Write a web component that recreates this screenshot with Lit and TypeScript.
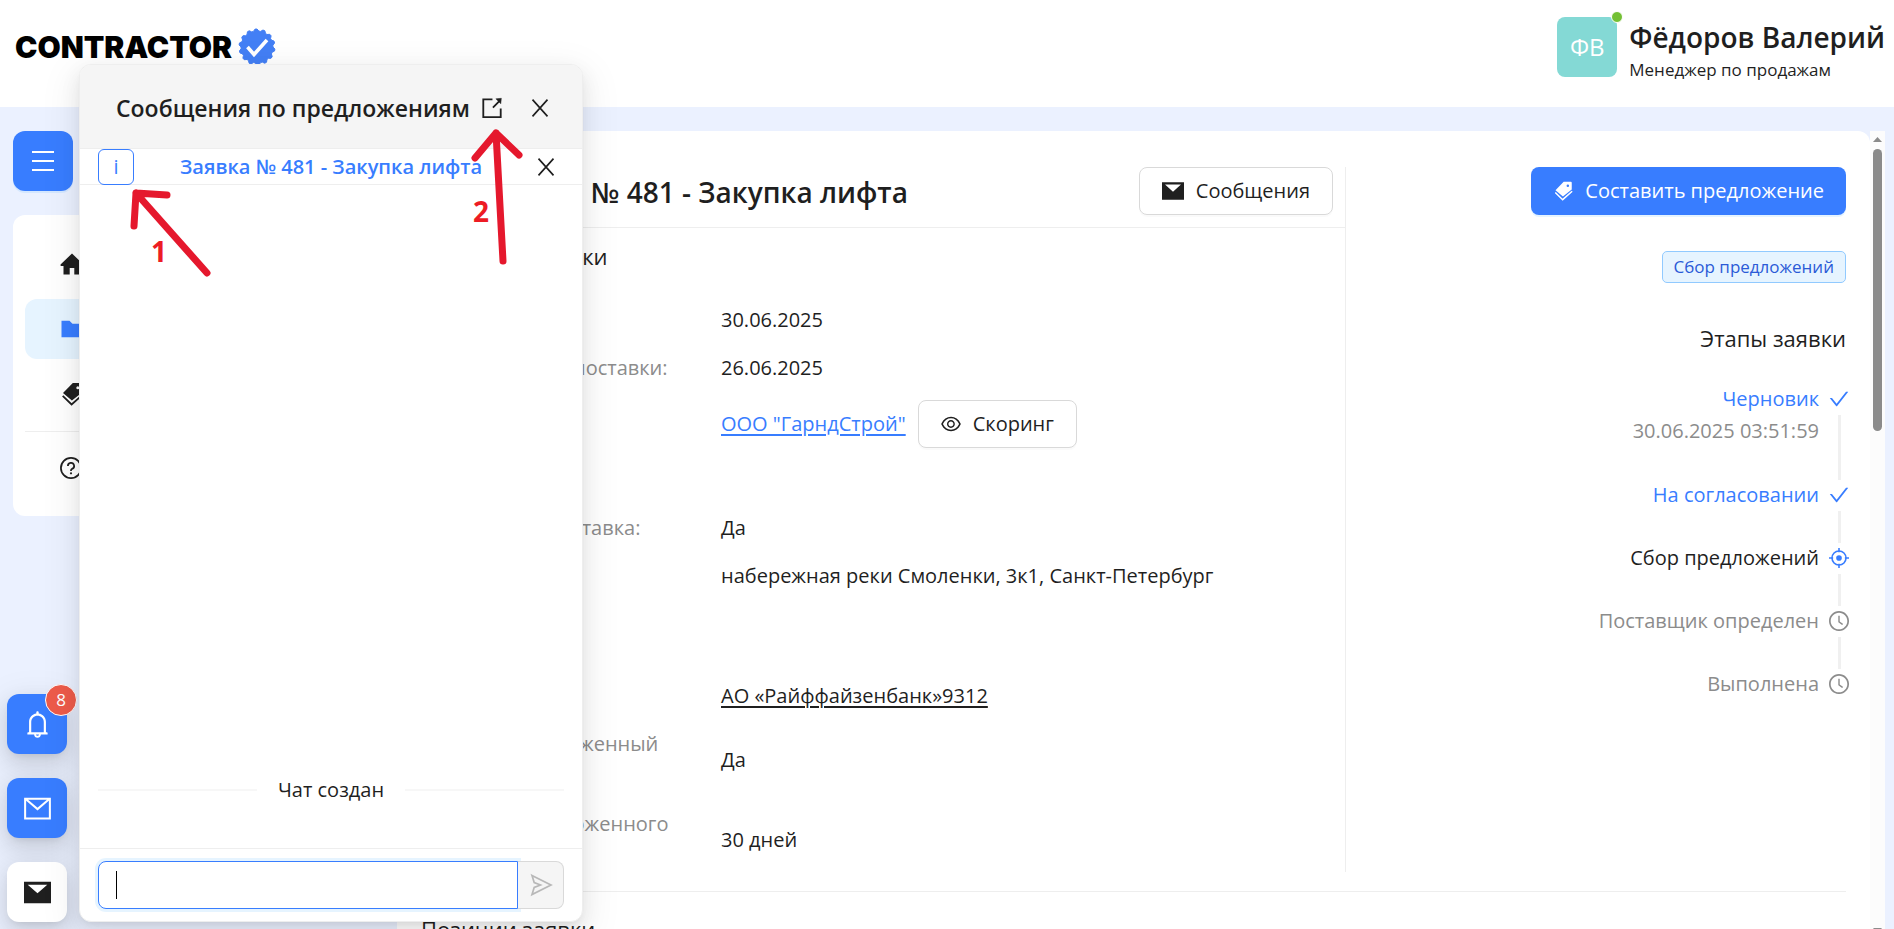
import { LitElement, html, css, svg, nothing } from "lit";
import { customElement } from "lit/decorators.js";

const icon = (name: string, size = 20) => {
  const shapes: Record<string, unknown> = {
    menu: svg`<path d="M1 3h22M1 12h22M1 21h22" fill="none" stroke="currentColor" stroke-width="2"/>`,
    back: svg`<path d="M22 12H3M11 3l-9 9 9 9" fill="none" stroke="currentColor" stroke-width="2"/>`,
    home: svg`<path d="M12 1.500 0.800 12.200c-.7.700-.3 1.800.7 1.800H3.500v8.500h6.200v-6.500h4.600v6.500h6.200V14h2c1 0 1.400-1.100.7-1.800Z"/>`,
    folder: svg`<path d="M1.500 3.800h8l3 3h10v13.400h-21Z"/>`,
    tags: svg`<path fill-rule="evenodd" d="M12.800 1h8.700c.6 0 1 .4 1 1v8.300L11.900 18.500 3 11Zm5 3.300a1.500 1.500 0 1 0 0 3 1.500 1.500 0 0 0 0-3Z"/><path d="m2.700 13.800 8.900 8.600L23 12.300" fill="none" stroke="currentColor" stroke-width="1.800"/>`,
    question: svg`<g fill="none" stroke="currentColor" stroke-width="1.900"><circle cx="12" cy="12" r="11"/><path d="M8.600 9.800a3.400 3.400 0 1 1 4.600 3.100c-.8.300-1.200.9-1.200 1.700v.6"/></g><circle cx="12" cy="17.800" r="1.200"/>`,
    close: svg`<path d="m3 2 18 20M21 2 3 22" fill="none" stroke="currentColor" stroke-width="2"/>`,
    export: svg`<path d="M12.500 2.500h-10v19.500h19V12.500M13 11.500 20 4.500" fill="none" stroke="currentColor" stroke-width="2"/><path d="m16.200 2 6-.6-.6 6Z" stroke="currentColor" stroke-width=".5"/>`,
    mailFilled: svg`<path fill-rule="evenodd" d="M0 2.500h24v19H0ZM3.300 5 12 12.700 20.700 5Z"/>`,
    mail: svg`<path d="M1 3.300h22v17.600H1ZM2 4l10 8.500L22 4" fill="none" stroke="currentColor" stroke-width="1.800"/>`,
    send: svg`<path d="M3 2.500 22 12 3 21.500l2.200-7L11.500 12 5.200 9.500Z" fill="none" stroke="currentColor" stroke-width="1.700"/>`,
    aim: svg`<g fill="none" stroke="currentColor" stroke-width="1.900"><circle cx="12" cy="12" r="8.400"/><path d="M12 0v5M12 19v5M0 12h5M19 12h5"/></g><circle cx="12" cy="12" r="3.400"/>`,
    check: svg`<path transform="scale(.0268) translate(-64 -64)" d="M912 190h-69.900c-9.800 0-19.100 4.500-25.100 12.200L404.700 724.500 207 474a32 32 0 00-25.100-12.200H112c-6.700 0-10.400 7.700-6.300 12.900l273.900 347c12.800 16.200 37.400 16.200 50.300 0l488.400-618.900c4.100-5.100.4-12.800-6.300-12.800z"/>`,
    clock: svg`<g transform="scale(.0268) translate(-64 -64)"><path d="M512 64C264.600 64 64 264.600 64 512s200.600 448 448 448 448-200.600 448-448S759.400 64 512 64zm0 820c-205.400 0-372-166.600-372-372s166.600-372 372-372 372 166.600 372 372-166.600 372-372 372z"/><path d="M686.700 638.600L544.100 535.500V288c0-4.400-3.600-8-8-8H488c-4.400 0-8 3.600-8 8v275.400c0 2.600 1.200 5 3.300 6.500l165.400 120.600c3.600 2.600 8.600 1.800 11.200-1.700l28.600-39c2.600-3.700 1.800-8.700-1.800-11.200z"/></g>`,
    eye: svg`<path transform="scale(.0268) translate(-64 -64)" d="M942.200 486.200C847.400 286.500 704.100 186 512 186c-192.200 0-335.400 100.500-430.200 300.300a60.300 60.300 0 000 51.500C176.600 737.500 319.900 838 512 838c192.200 0 335.400-100.500 430.200-300.300 7.700-16.200 7.700-35 0-51.500zM512 766c-161.300 0-279.400-81.800-362.700-254C232.600 339.800 350.700 258 512 258c161.300 0 279.400 81.800 362.700 254C791.500 684.200 673.400 766 512 766zm-4-430c-97.200 0-176 78.800-176 176s78.800 176 176 176 176-78.800 176-176-78.800-176-176-176zm0 288c-61.900 0-112-50.100-112-112s50.100-112 112-112 112 50.100 112 112-50.100 112-112 112z"/>`,
    bell: svg`<path transform="scale(.0268) translate(-64 -64)" d="M816 768h-24V428c0-141.100-104.300-257.800-240-277.200V112c0-22.100-17.900-40-40-40s-40 17.900-40 40v38.800C336.300 170.200 232 286.900 232 428v340h-24c-17.700 0-32 14.300-32 32v32c0 4.400 3.600 8 8 8h216c0 61.800 50.200 112 112 112s112-50.200 112-112h216c4.400 0 8-3.600 8-8v-32c0-17.700-14.300-32-32-32zM512 888c-26.500 0-48-21.500-48-48h96c0 26.500-21.500 48-48 48zM304 768V428c0-55.600 21.600-107.800 60.900-147.100S456.400 220 512 220c55.600 0 107.800 21.600 147.100 60.900S720 372.400 720 428v340H304z"/>`,
  };
  return html`<svg width=${size} height=${size} viewBox="0 0 24 24" fill="currentColor" aria-hidden="true">${shapes[name]}</svg>`;
};

/** Rosette outline with rounded teeth around the wordmark tick. */
const rosette = () => {
  const pts: string[] = [];
  const teeth = 14;
  for (let i = 0; i < teeth * 4; i++) {
    const a = (i / (teeth * 4)) * Math.PI * 2 - Math.PI / 2 - 0.11;
    const r = i % 4 < 2 ? 18 : 16;
    pts.push(`${(19 + r * Math.cos(a)).toFixed(2)},${(19 + r * Math.sin(a)).toFixed(2)}`);
  }
  return html`<svg width="38" height="38" viewBox="0 0 38 38" aria-hidden="true">
    <polygon points=${pts.join(" ")} fill="#437ff5" stroke="#437ff5" stroke-width="1" stroke-linejoin="round"/>
    <path d="m9.500 19 6.500 7.500L29 12" fill="none" stroke="#fff" stroke-width="3.600"/>
  </svg>`;
};

type Row = { label: string; value: unknown };

@customElement("app-root")
export class AppRoot extends LitElement {
  static styles = css`
    :host {
      --blue: #387dff;
      --ink: #1f1f1f;
      --muted: #8c8c8c;
      --line: #eeeeee;
      display: flex;
      flex-direction: column;
      height: 100vh;
      overflow: hidden;
      position: relative;
      background: #ebf1ff;
      color: var(--ink);
      font: 400 20px/32px "Open Sans", "Noto Sans", sans-serif;
    }
    * { box-sizing: border-box; }
    h1, h2, p, ul, dl, dd, dt { margin: 0; padding: 0; font-weight: 400; }
    ul { list-style: none; }
    svg { display: block; flex: none; }
    button { font: inherit; color: inherit; border: 0; background: none; padding: 0; cursor: pointer;
      display: flex; align-items: center; justify-content: center; }
    .top { flex: none; height: 107px; background: #fff; display: flex; justify-content: space-between;
      align-items: flex-start; padding: 0 9px 0 15px; }
    .brand { display: flex; align-items: center; gap: 12px; height: 94px; color: #000;
      font: 900 30px/32px Inter, sans-serif; text-decoration: none; }
    .brand { gap: 6px; }
    .user { display: flex; gap: 12px; padding-top: 17px; }
    .avatar { position: relative; width: 60px; height: 60px; border-radius: 8px; background: #84d9d5; color: #fff;
      font-size: 24px; display: flex; align-items: center; justify-content: center; }
    .online { position: absolute; top: -6px; right: -6px; width: 12px; height: 12px; border-radius: 50%;
      background: #73c034; border: 1px solid #fff; }
    .name { font-size: 28px; line-height: 40px; font-weight: 600; }
    .role { font-size: 17px; line-height: 26px; }
    .body { flex: 1; min-height: 0; display: grid; grid-template-columns: 372px minmax(0, 1fr) 15px;
      padding: 24px 9px 0 13px; }
    .side { display: flex; flex-direction: column; align-items: flex-start; gap: 24px; }
    .square { width: 60px; height: 60px; border-radius: 12px; background: var(--blue); color: #fff; }
    .menu-btn { box-shadow: 0 2px 0 rgba(5, 145, 255, .1); }
    .nav { width: 100%; background: #fff; border-radius: 12px; padding: 19px 12px 18px; display: flex; flex-direction: column; gap: 5px; }
    .nav a { display: flex; align-items: center; height: 60px; padding-left: 35px; color: var(--ink); border-radius: 12px; }
    .nav a.on { background: #e6f4ff; color: var(--blue); }
    .nav .rule { margin-top: 2px; padding-top: 6px; border-top: 1px solid var(--line); }
    .card { margin-left: 12px; background: #fff; border-radius: 12px 12px 0 0; padding: 36px 24px 0; overflow: hidden; }
    .cols { display: grid; grid-template-columns: minmax(0, 925fr) minmax(0, 500fr); }
    .left { border-right: 1px solid var(--line); height: 705px; }
    .head { display: flex; gap: 16px; align-items: flex-start; padding: 0 12px 12px 0;
      border-bottom: 1px solid var(--line); }
    h1 { flex: 1; font-size: 28px; line-height: 50px; font-weight: 600; height: 48px; }
    h2 { font-size: 22px; line-height: 32px; }
    .btn { height: 48px; border: 1px solid #d9d9d9; border-radius: 8px; background: #fff; padding: 0 22px; gap: 12px;
      box-shadow: 0 2px 0 rgba(0, 0, 0, .02); }
    .btn.square-btn { width: 48px; padding: 0; }
    .btn.primary { border: 0; background: var(--blue); color: #fff; box-shadow: 0 2px 0 rgba(5, 145, 255, .1); }
    .section { margin-top: 12px; }
    .section + .section { margin-top: 24px; }
    dl { display: flex; flex-direction: column; gap: 16px; margin-top: 32px; }
    .row { display: grid; grid-template-columns: 276px minmax(0, 1fr); column-gap: 24px; align-items: center; }
    dt { color: var(--muted); white-space: pre-line; min-height: 32px; }
    dd { display: flex; align-items: center; gap: 12px; }
    dd a { color: var(--ink); text-underline-offset: 3px; }
    dd a.link { color: var(--blue); }
    .right { display: flex; flex-direction: column; align-items: flex-end; }
    .tag { margin-top: 36px; border: 1px solid #91caff; background: #e6f4ff; color: #2b5bd7; border-radius: 5px;
      font-size: 17px; line-height: 30px; padding: 0 11px; }
    .right h2 { margin-top: 39px; }
    .steps { margin: 29px -3px 0 0; }
    .steps li { display: grid; grid-template-columns: auto 20px; column-gap: 10px; text-align: right; color: var(--muted); min-height: 63px; }
    .steps li.tall { min-height: 96px; }
    .steps .done, .steps .now svg { color: var(--blue); }
    .steps .now { color: var(--ink); }
    .steps .when { color: var(--muted); }
    .mark { display: flex; flex-direction: column; align-items: center; padding-top: 6px; }
    .mark i { flex: 1; width: 3px; background: #f0f0f0; margin: 6px 0 -1px; }
    .below { border-top: 1px solid var(--line); margin-top: 19px; padding-top: 21px; }
    .scroll { background: #fcfcfc; display: flex; flex-direction: column; align-items: center; padding: 6px 0 0; margin-bottom: -12px; }
    .scroll b { width: 9px; height: 282px; border-radius: 5px; background: #8b8b8b; margin: 7px 0 auto; }
    .scroll svg { fill: #8b8b8b; }
    .scroll svg:last-child { margin-bottom: 8px; }

    .floats { position: absolute; left: 7px; bottom: 7px; display: flex; flex-direction: column; gap: 24px; }
    .floats .square { box-shadow: 0 8px 20px rgba(0, 0, 0, .1), 0 4px 8px -5px rgba(0, 0, 0, .15), 0 11px 35px 10px rgba(0, 0, 0, .06); position: relative; }
    .floats .plain { background: #fff; color: var(--ink); }
    .count { position: absolute; top: -10px; right: -10px; width: 32px; height: 32px; border-radius: 50%;
      background: #ed5b4a; border: 1px solid #fff; font-size: 17px; line-height: 30px; }

    .chat { position: absolute; left: 79px; top: 64px; bottom: 7px; width: 504px; display: flex; flex-direction: column;
      background: #fff; border: 1px solid #eee; border-radius: 12px; overflow: hidden;
      box-shadow: 0 8px 20px rgba(0, 0, 0, .08), 0 4px 8px -5px rgba(0, 0, 0, .12), 0 11px 35px 10px rgba(0, 0, 0, .05); }
    .chat-top { display: flex; align-items: center; height: 84px; background: #f5f5f5; padding: 2px 32px 0 36px; border-bottom: 1px solid var(--line); }
    .chat-top h2 { font-size: 23px; font-weight: 600; flex: 1; white-space: nowrap; }
    .chat-top button + button { margin-left: 27px; }
    .chat-sub { display: flex; align-items: center; height: 36px; padding: 0 26px 0 18px; border-bottom: 1px solid var(--line); }
    .chat-sub a { flex: 1; padding-left: 46px; color: var(--blue); font-weight: 600; text-decoration: none; }
    .info { width: 36px; height: 36px; border: 1px solid var(--blue); border-radius: 6px; color: var(--blue); }
    .log { flex: 1; display: flex; flex-direction: column; justify-content: flex-end; padding: 0 18px 42px; }
    .created { display: flex; align-items: center; gap: 21px; }
    .created::before, .created::after { content: ""; flex: 1; height: 2px; background: #f7f7f7; }
    .send { display: flex; position: relative; border-top: 1px solid var(--line); padding: 12px 18px; }
    .send input { flex: 1; min-width: 0; height: 48px; border: 1px solid var(--blue); border-radius: 8px 0 0 8px; padding: 0 17px;
      font: inherit; outline: 0; box-shadow: 0 0 0 3px rgba(5, 145, 255, .1); background: #fff; }
    .send button { width: 46px; height: 48px; background: #f5f5f5; color: #b8b8b8; border: 1px solid #d9d9d9; border-left: 0; border-radius: 0 8px 8px 0; }
    .caret { position: absolute; left: 36px; top: 22px; width: 1px; height: 28px; background: #000; }
    .notes { position: absolute; left: 80px; top: 64px; width: 503px; height: 240px; pointer-events: none; overflow: visible; }
    .notes path { fill: none; stroke: #e5182d; stroke-width: 7; stroke-linecap: round; stroke-linejoin: round; }
    .notes text { font: 700 28px "Open Sans", sans-serif; fill: #ed1c24; }
  `;

  private general: Row[] = [
    { label: "Дата заявки:", value: "30.06.2025" },
    { label: "Желаемая дата поставки:", value: "26.06.2025" },
    {
      label: "Заказчик:",
      value: html`<a class="link" href="#">ООО "ГарндСтрой"</a><button class="btn">${icon("eye", 20)}Скоринг</button>`,
    },
    { label: "", value: nothing },
    { label: "Необходима доставка:", value: "Да" },
    { label: "Адрес:", value: "набережная реки Смоленки, 3к1, Санкт-Петербург" },
  ];

  private payment: Row[] = [
    { label: "Счёт:", value: html`<a href="#">АО «Райффайзенбанк»9312</a>` },
    { label: "Доступный отложенный\nплатёж:", value: "Да" },
    { label: "Период для отложенного\nплатежа:", value: "30 дней" },
  ];

  private rows(list: Row[]) {
    return html`<dl>${list.map((r) => html`<div class="row"><dt>${r.label}</dt><dd>${r.value}</dd></div>`)}</dl>`;
  }

  render() {
    return html`
      <header class="top">
        <a class="brand" href="#">CONTRACTOR${rosette()}</a>
        <div class="user">
          <div class="avatar">ФВ<span class="online"></span></div>
          <div><p class="name">Фёдоров Валерий</p><p class="role">Менеджер по продажам</p></div>
        </div>
      </header>
      <div class="body">
        <div class="side">
          <button class="square menu-btn" aria-label="Меню">${icon("menu", 24)}</button>
          <ul class="nav">
            <li><a href="#" aria-label="Главная">${icon("home", 24)}</a></li>
            <li><a class="on" href="#" aria-label="Заявки">${icon("folder", 24)}</a></li>
            <li><a href="#" aria-label="Предложения">${icon("tags", 24)}</a></li>
            <li class="rule"><a href="#" aria-label="Помощь">${icon("question", 22)}</a></li>
          </ul>
        </div>
        <main class="card">
          <div class="cols">
            <div class="left">
              <div class="head">
                <button class="btn square-btn" aria-label="Назад">${icon("back", 20)}</button>
                <h1>Заявка № 481 - Закупка лифта</h1>
                <button class="btn">${icon("mailFilled", 22)}Сообщения</button>
              </div>
              <section class="section"><h2>Описание заявки</h2>${this.rows(this.general)}</section>
              <section class="section"><h2>Оплата</h2>${this.rows(this.payment)}</section>
            </div>
            <div class="right">
              <button class="btn primary">${icon("tags", 20)}Составить предложение</button>
              <span class="tag">Сбор предложений</span>
              <h2>Этапы заявки</h2>
              <ul class="steps">
                <li class="tall">
                  <div><p class="done">Черновик</p><p class="when">30.06.2025 03:51:59</p></div>
                  <span class="mark done">${icon("check")}<i></i></span>
                </li>
                <li><p class="done">На согласовании</p><span class="mark done">${icon("check")}<i></i></span></li>
                <li class="now"><p>Сбор предложений</p><span class="mark">${icon("aim")}<i></i></span></li>
                <li><p>Поставщик определен</p><span class="mark">${icon("clock")}<i></i></span></li>
                <li><p>Выполнена</p><span class="mark">${icon("clock")}</span></li>
              </ul>
            </div>
          </div>
          <div class="below"><h2>Позиции заявки</h2></div>
        </main>
        <div class="scroll">
          <svg width="9" height="5" viewBox="0 0 9 5"><path d="M0 5 4.500 0 9 5Z"/></svg>
          <b></b>
          <svg width="9" height="5" viewBox="0 0 9 5"><path d="M0 0 4.500 5 9 0Z"/></svg>
        </div>
      </div>

      <div class="floats">
        <button class="square" aria-label="Уведомления">${icon("bell", 27)}<span class="count">8</span></button>
        <button class="square" aria-label="Почта">${icon("mail", 27)}</button>
        <button class="square plain" aria-label="Сообщения">${icon("mailFilled", 27)}</button>
      </div>

      <section class="chat">
        <div class="chat-top">
          <h2>Сообщения по предложениям</h2>
          <button aria-label="Открыть в новом окне">${icon("export", 22)}</button>
          <button aria-label="Закрыть">${icon("close", 20)}</button>
        </div>
        <div class="chat-sub">
          <button class="info" aria-label="Информация">i</button>
          <a href="#">Заявка № 481 - Закупка лифта</a>
          <button aria-label="Закрыть чат">${icon("close", 20)}</button>
        </div>
        <div class="log"><div class="created">Чат создан</div></div>
        <div class="send">
          <input type="text" aria-label="Сообщение" />
          <button aria-label="Отправить">${icon("send", 24)}</button>
          <span class="caret"></span>
        </div>
      </section>
      <svg class="notes" viewBox="0 0 503 240">
        <path d="M87 131 56 129 54 162M56 129 127 209"/>
        <path d="M395 94 416 69 439 91M416 69 423 197"/>
        <text x="71" y="198">1</text>
        <text x="393" y="158">2</text>
      </svg>
    `;
  }
}
